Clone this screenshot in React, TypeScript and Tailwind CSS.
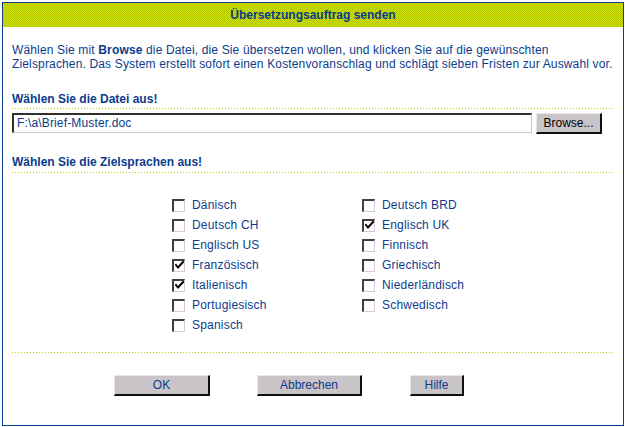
import React from 'react';

const languages: { name: string; checked: boolean }[][] = [
    [
        { name: 'Dänisch', checked: false },
        { name: 'Deutsch CH', checked: false },
        { name: 'Englisch US', checked: false },
        { name: 'Französisch', checked: true },
        { name: 'Italienisch', checked: true },
        { name: 'Portugiesisch', checked: false },
        { name: 'Spanisch', checked: false },
    ],
    [
        { name: 'Deutsch BRD', checked: false },
        { name: 'Englisch UK', checked: true },
        { name: 'Finnisch', checked: false },
        { name: 'Griechisch', checked: false },
        { name: 'Niederländisch', checked: false },
        { name: 'Schwedisch', checked: false },
    ],
];

const DottedLine: React.FC<{ className?: string }> = ({ className = '' }) => (
    <div className={`h-px bg-[repeating-linear-gradient(90deg,#cccc00_0_1px,transparent_1px_3px)] ${className}`} />
);

const CheckBox: React.FC<{ checked: boolean }> = ({ checked }) => (
    <span className="w-[13px] h-[13px] bg-white border-t-2 border-l-2 border-t-[#404040] border-l-[#404040] border-b border-r border-b-[#d8c8d8] border-r-[#d8c8d8] flex items-center justify-center">
        {checked && (
            <svg width="9" height="9" viewBox="0 0 9 9">
                <path d="M1 4 L3 6.5 L8 1" stroke="#000" strokeWidth="2" fill="none" strokeLinecap="square" />
            </svg>
        )}
    </span>
);

const GrayButton: React.FC<{ label: string; width: string }> = ({ label, width }) => (
    <button
        type="button"
        className={`${width} h-[21px] bg-[#c8c4c8] border-t border-l border-t-[#e8e8e8] border-l-[#e8e8e8] border-b-2 border-r-2 border-b-[#101010] border-r-[#101010] text-[12px] text-[#0c3c8c] leading-none`}
    >
        {label}
    </button>
);

export default function App() {
    return (
        <div className="w-[626px] h-[427px] bg-white pt-[2px] pl-[2px] font-['Liberation_Sans',Arial,sans-serif] text-[#0c3c8c]">
            <div className="w-[622px] h-[424px] border border-[#0b3d91] flex flex-col">

                {/* Header */}
                <div className="h-[24px] flex items-center justify-center bg-[repeating-conic-gradient(#d8dc00_0_25%,#a8cc00_0_50%)] bg-[length:2px_2px]">
                    <span className="text-[12px] font-bold text-[#0a3a8c]">Übersetzungsauftrag senden</span>
                </div>

                <div className="px-[9px] flex flex-col">
                    <p className="mt-[16px] text-[12px] leading-[14px] tracking-[0.15px] whitespace-nowrap">
                        Wählen Sie mit <span className="font-bold">Browse</span> die Datei, die Sie übersetzen wollen, und klicken Sie auf die gewünschten
                        <br />
                        Zielsprachen. Das System erstellt sofort einen Kostenvoranschlag und schlägt sieben Fristen zur Auswahl vor.
                    </p>

                    {/* File */}
                    <h3 className="mt-[21px] text-[12px] leading-[14px] font-bold">Wählen Sie die Datei aus!</h3>
                    <DottedLine className="mt-[2px]" />
                    <div className="mt-[4px] flex items-start gap-[4px]">
                        <div className="w-[520px] h-[20px] bg-white border-t-2 border-l-2 border-t-[#303030] border-l-[#303030] border-b border-r border-b-[#c8c8c8] border-r-[#c8c8c8] pl-[3px] text-[12px] leading-[17px] tracking-[0.15px]">
                            F:\a\Brief-Muster.doc
                        </div>
                        <button
                            type="button"
                            className="w-[66px] h-[21px] bg-[#c8c4c8] border-t border-l border-t-[#e8e8e8] border-l-[#e8e8e8] border-b-2 border-r-2 border-b-[#101010] border-r-[#101010] text-[12px] text-black leading-none"
                        >
                            Browse...
                        </button>
                    </div>

                    {/* Languages */}
                    <h3 className="mt-[21px] text-[12px] leading-[14px] font-bold">Wählen Sie die Zielsprachen aus!</h3>
                    <DottedLine className="mt-[3px]" />
                    <div className="mt-[22px] pl-[160px] grid grid-cols-[190px_190px]">
                        {languages.map((col, i) => (
                            <div key={i} className="flex flex-col">
                                {col.map(l => (
                                    <div key={l.name} className="h-[20px] flex items-center gap-[7px] text-[12px] tracking-[0.2px]">
                                        <CheckBox checked={l.checked} />
                                        <span>{l.name}</span>
                                    </div>
                                ))}
                            </div>
                        ))}
                    </div>

                    <DottedLine className="mt-[17px]" />

                    {/* Footer buttons */}
                    <div className="mt-[22px] pl-[102px] flex">
                        <GrayButton label="OK" width="w-[96px]" />
                        <div className="w-[47px]" />
                        <GrayButton label="Abbrechen" width="w-[105px]" />
                        <div className="w-[48px]" />
                        <GrayButton label="Hilfe" width="w-[54px]" />
                    </div>
                </div>
            </div>
        </div>
    );
}
